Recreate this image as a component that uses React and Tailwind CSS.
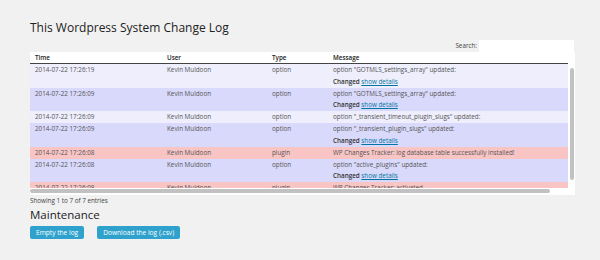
const rows = [
  { time: '2014-07-22 17:26:19', type: 'option', msg: 'option "GOTMLS_settings_array" updated:', details: true, tone: 'light' },
  { time: '2014-07-22 17:26:09', type: 'option', msg: 'option "GOTMLS_settings_array" updated:', details: true, tone: 'dark' },
  { time: '2014-07-22 17:26:09', type: 'option', msg: 'option "_transient_timeout_plugin_slugs" updated:', details: false, tone: 'light' },
  { time: '2014-07-22 17:26:09', type: 'option', msg: 'option "_transient_plugin_slugs" updated:', details: true, tone: 'dark' },
  { time: '2014-07-22 17:26:08', type: 'plugin', msg: 'WP Changes Tracker: log database table successfully installed!', details: false, tone: 'pink' },
  { time: '2014-07-22 17:26:08', type: 'option', msg: 'option "active_plugins" updated:', details: true, tone: 'dark' },
  { time: '2014-07-22 17:26:08', type: 'plugin', msg: 'WP Changes Tracker: activated', details: false, tone: 'pink' },
];

const toneClass = {
  light: 'bg-[#eeeefc]',
  dark: 'bg-[#d9d9fb]',
  pink: 'bg-[#f9c4c4]',
};

function Row({ row }) {
  return (
    <div className={`flex py-[0.25px] ${toneClass[row.tone]}`}>
      <div className="w-[132px] shrink-0 pl-[5px]">{row.time}</div>
      <div className="w-[105px] shrink-0 pl-[5px]">Kevin Muldoon</div>
      <div className="w-[61px] shrink-0 pl-[5px]">{row.type}</div>
      <div className="flex-1 pl-[5px]">
        <div>{row.msg}</div>
        {row.details && (
          <div>
            <span className="font-semibold text-[#333]">Changed</span>{' '}
            <span className="text-[#0074a2] underline">show details</span>
          </div>
        )}
      </div>
    </div>
  );
}

export default function App() {
  return (
    <div className="w-[600px] h-[260px] overflow-hidden bg-[#f1f1f1] pl-[30px] pr-[25px] font-['Open_Sans',sans-serif] text-[#555]">
      <h1 className="pt-[19px] text-[12px] leading-[18px] text-[#222]">This Wordpress System Change Log</h1>
      <div className="mt-[2px] flex h-[13px] items-center justify-end gap-[2px] pr-[1px] text-[6.3px] text-[#444]">
        <span>Search:</span>
        <div className="h-[12px] w-[95px] bg-white" />
      </div>
      <div className="h-[143px] w-[545px] bg-white text-[6.3px] leading-[11.5px]">
        <div className="flex h-[12px] w-[538px] border-b border-[#444] leading-[11px] font-semibold text-[#222]">
          <div className="w-[132px] pl-[5px]">Time</div>
          <div className="w-[105px] pl-[5px]">User</div>
          <div className="w-[61px] pl-[5px]">Type</div>
          <div className="flex-1 pl-[5px]">Message</div>
        </div>
        <div className="flex h-[124px]">
          <div className="w-[538px] overflow-hidden">
            {rows.map((row, i) => (
              <Row key={i} row={row} />
            ))}
          </div>
          <div className="flex w-[7px] justify-center pt-[4px]">
            <div className="h-[112px] w-[4px] rounded-full bg-[#c1c1c1]" />
          </div>
        </div>
        <div className="pt-[1px]">
          <div className="h-[3.5px] w-[520px] rounded-full bg-[#c1c1c1]" />
        </div>
      </div>
      <p className="mt-[1px] text-[6.3px] leading-[9px] text-[#444]">Showing 1 to 7 of 7 entries</p>
      <h2 className="mt-[2px] text-[11.5px] leading-[15px] text-[#222]">Maintenance</h2>
      <div className="mt-[4px] flex gap-[13px]">
        <button className="h-[13px] rounded-[2px] bg-[#2ea2cc] px-[6px] text-[6.6px] leading-[13px] text-white">Empty the log</button>
        <button className="h-[13px] rounded-[2px] bg-[#2ea2cc] px-[6px] text-[6.6px] leading-[13px] text-white">Download the log (.csv)</button>
      </div>
    </div>
  );
}
